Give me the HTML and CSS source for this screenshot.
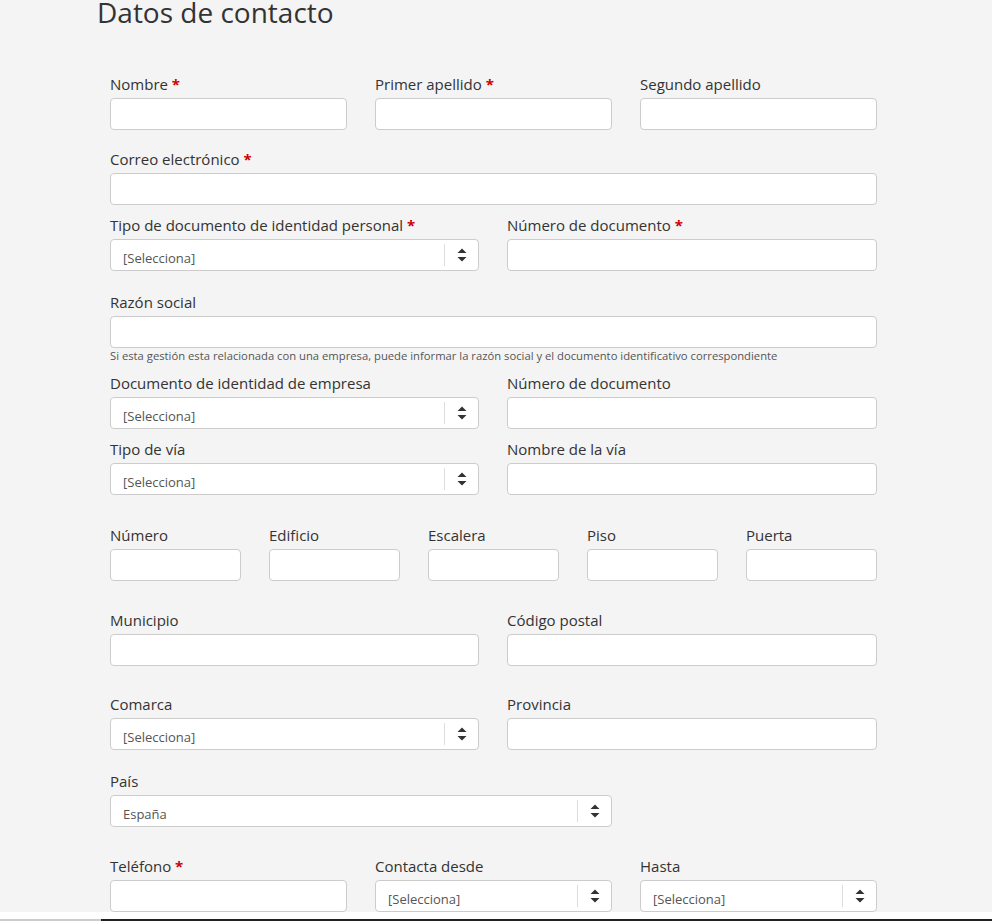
FILE: index.html
```html
<!DOCTYPE html>
<html lang="es">
<head>
<meta charset="utf-8">
<title>Datos de contacto</title>
<link rel="stylesheet" href="styles.css">
</head>
<body>
<main class="page">
  <h1 class="title">Datos de contacto</h1>
  <form class="form">
    <div class="row cols-3 r1">
      <div class="field"><label class="label">Nombre <span class="req">*</span></label><div class="input"></div></div>
      <div class="field"><label class="label">Primer apellido <span class="req">*</span></label><div class="input"></div></div>
      <div class="field"><label class="label">Segundo apellido</label><div class="input"></div></div>
    </div>
    <div class="row r2">
      <div class="field"><label class="label">Correo electrónico <span class="req">*</span></label><div class="input"></div></div>
    </div>
    <div class="row cols-2 r3">
      <div class="field"><label class="label">Tipo de documento de identidad personal <span class="req">*</span></label>
        <div class="input select"><span class="select-text">[Selecciona]</span><span class="select-arrow"><svg width="10" height="14" viewBox="0 0 10 14"><path d="M0.5 5 L5 0.4 L9.5 5 Z M0.5 9 L9.5 9 L5 13.6 Z" fill="#333"/></svg></span></div>
      </div>
      <div class="field"><label class="label">Número de documento <span class="req">*</span></label><div class="input"></div></div>
    </div>
    <div class="row r4">
      <div class="field"><label class="label">Razón social</label><div class="input"></div>
        <p class="help">Si esta gestión esta relacionada con una empresa, puede informar la razón social y el documento identificativo correspondiente</p>
      </div>
    </div>
    <div class="row cols-2 r5">
      <div class="field"><label class="label">Documento de identidad de empresa</label>
        <div class="input select"><span class="select-text">[Selecciona]</span><span class="select-arrow"><svg width="10" height="14" viewBox="0 0 10 14"><path d="M0.5 5 L5 0.4 L9.5 5 Z M0.5 9 L9.5 9 L5 13.6 Z" fill="#333"/></svg></span></div>
      </div>
      <div class="field"><label class="label">Número de documento</label><div class="input"></div></div>
    </div>
    <div class="row cols-2 r6">
      <div class="field"><label class="label">Tipo de vía</label>
        <div class="input select"><span class="select-text">[Selecciona]</span><span class="select-arrow"><svg width="10" height="14" viewBox="0 0 10 14"><path d="M0.5 5 L5 0.4 L9.5 5 Z M0.5 9 L9.5 9 L5 13.6 Z" fill="#333"/></svg></span></div>
      </div>
      <div class="field"><label class="label">Nombre de la vía</label><div class="input"></div></div>
    </div>
    <div class="row cols-5 r7">
      <div class="field"><label class="label">Número</label><div class="input"></div></div>
      <div class="field"><label class="label">Edificio</label><div class="input"></div></div>
      <div class="field"><label class="label">Escalera</label><div class="input"></div></div>
      <div class="field"><label class="label">Piso</label><div class="input"></div></div>
      <div class="field"><label class="label">Puerta</label><div class="input"></div></div>
    </div>
    <div class="row cols-2 r8">
      <div class="field"><label class="label">Municipio</label><div class="input"></div></div>
      <div class="field"><label class="label">Código postal</label><div class="input"></div></div>
    </div>
    <div class="row cols-2 r9">
      <div class="field"><label class="label">Comarca</label>
        <div class="input select"><span class="select-text">[Selecciona]</span><span class="select-arrow"><svg width="10" height="14" viewBox="0 0 10 14"><path d="M0.5 5 L5 0.4 L9.5 5 Z M0.5 9 L9.5 9 L5 13.6 Z" fill="#333"/></svg></span></div>
      </div>
      <div class="field"><label class="label">Provincia</label><div class="input"></div></div>
    </div>
    <div class="row cols-3 r10">
      <div class="field span-2"><label class="label">País</label>
        <div class="input select"><span class="select-text">España</span><span class="select-arrow"><svg width="10" height="14" viewBox="0 0 10 14"><path d="M0.5 5 L5 0.4 L9.5 5 Z M0.5 9 L9.5 9 L5 13.6 Z" fill="#333"/></svg></span></div>
      </div>
    </div>
    <div class="row cols-3 r11">
      <div class="field"><label class="label">Teléfono <span class="req">*</span></label><div class="input"></div></div>
      <div class="field"><label class="label">Contacta desde</label>
        <div class="input select"><span class="select-text">[Selecciona]</span><span class="select-arrow"><svg width="10" height="14" viewBox="0 0 10 14"><path d="M0.5 5 L5 0.4 L9.5 5 Z M0.5 9 L9.5 9 L5 13.6 Z" fill="#333"/></svg></span></div>
      </div>
      <div class="field"><label class="label">Hasta</label>
        <div class="input select"><span class="select-text">[Selecciona]</span><span class="select-arrow"><svg width="10" height="14" viewBox="0 0 10 14"><path d="M0.5 5 L5 0.4 L9.5 5 Z M0.5 9 L9.5 9 L5 13.6 Z" fill="#333"/></svg></span></div>
      </div>
    </div>
  </form>
</main>
<div class="footer-gap"></div>
<div class="footer-line"><span class="footer-line-left"></span><span class="footer-line-right"></span></div>
</body>
</html>
```

FILE: styles.css
```css
html, body {
  margin: 0;
  padding: 0;
  background: #fff;
}
body {
  font-family: "Open Sans", "Noto Sans", sans-serif;
  color: #333;
  overflow: hidden;
}
.page {
  display: flow-root;
  background: #f4f4f4;
  height: 912px;
  box-sizing: border-box;
  padding-left: 97px;
  overflow: hidden;
}
.title {
  margin: -7px 0 0;
  font-size: 28px;
  font-weight: 400;
  line-height: 38px;
  color: #333;
}
.form {
  margin: 43px 0 0 13px;
  width: 767px;
}
.row {
  display: grid;
  grid-template-columns: 1fr;
  column-gap: 28px;
}
.cols-2 { grid-template-columns: 369px 1fr; }
.cols-3 { grid-template-columns: repeat(3, 1fr); }
.cols-5 { grid-template-columns: repeat(5, 1fr); }
.span-2 { grid-column: span 2; }
.r2 { margin-top: 19px; }
.r3 { margin-top: 10px; }
.r4 { margin-top: 21px; }
.r5 { margin-top: 10px; }
.r6 { margin-top: 10px; }
.r7 { margin-top: 30px; }
.r8 { margin-top: 29px; }
.r9 { margin-top: 28px; }
.r10 { margin-top: 21px; }
.r11 { margin-top: 29px; }
.field {
  display: flex;
  flex-direction: column;
  min-width: 0;
}
.label {
  display: block;
  font-size: 15px;
  font-weight: 500;
  line-height: 20px;
  margin-bottom: 4px;
  color: #333;
  white-space: nowrap;
}
.req {
  color: #c00;
  font-weight: 700;
}
.input {
  height: 32px;
  box-sizing: border-box;
  background: #fff;
  border: 1px solid #ccc;
  border-radius: 4px;
}
.select {
  display: flex;
  align-items: center;
}
.select-text {
  flex: 1;
  padding: 6px 0 0 12px;
  font-size: 13px;
  line-height: 18px;
  color: #555;
}
.select-arrow {
  width: 34px;
  height: 22px;
  box-sizing: border-box;
  border-left: 1px solid #ddd;
  display: flex;
  align-items: center;
  justify-content: center;
}
.select-arrow svg {
  display: block;
}
.help {
  margin: 1px 0 0;
  font-size: 11.25px;
  line-height: 14px;
  color: #555;
  white-space: nowrap;
}
.footer-gap {
  height: 7px;
  background: #fff;
}
.footer-line {
  display: flex;
  height: 2px;
}
.footer-line-left {
  width: 101px;
  background: #ccc;
}
.footer-line-right {
  flex: 1;
  background: #222;
}
```
